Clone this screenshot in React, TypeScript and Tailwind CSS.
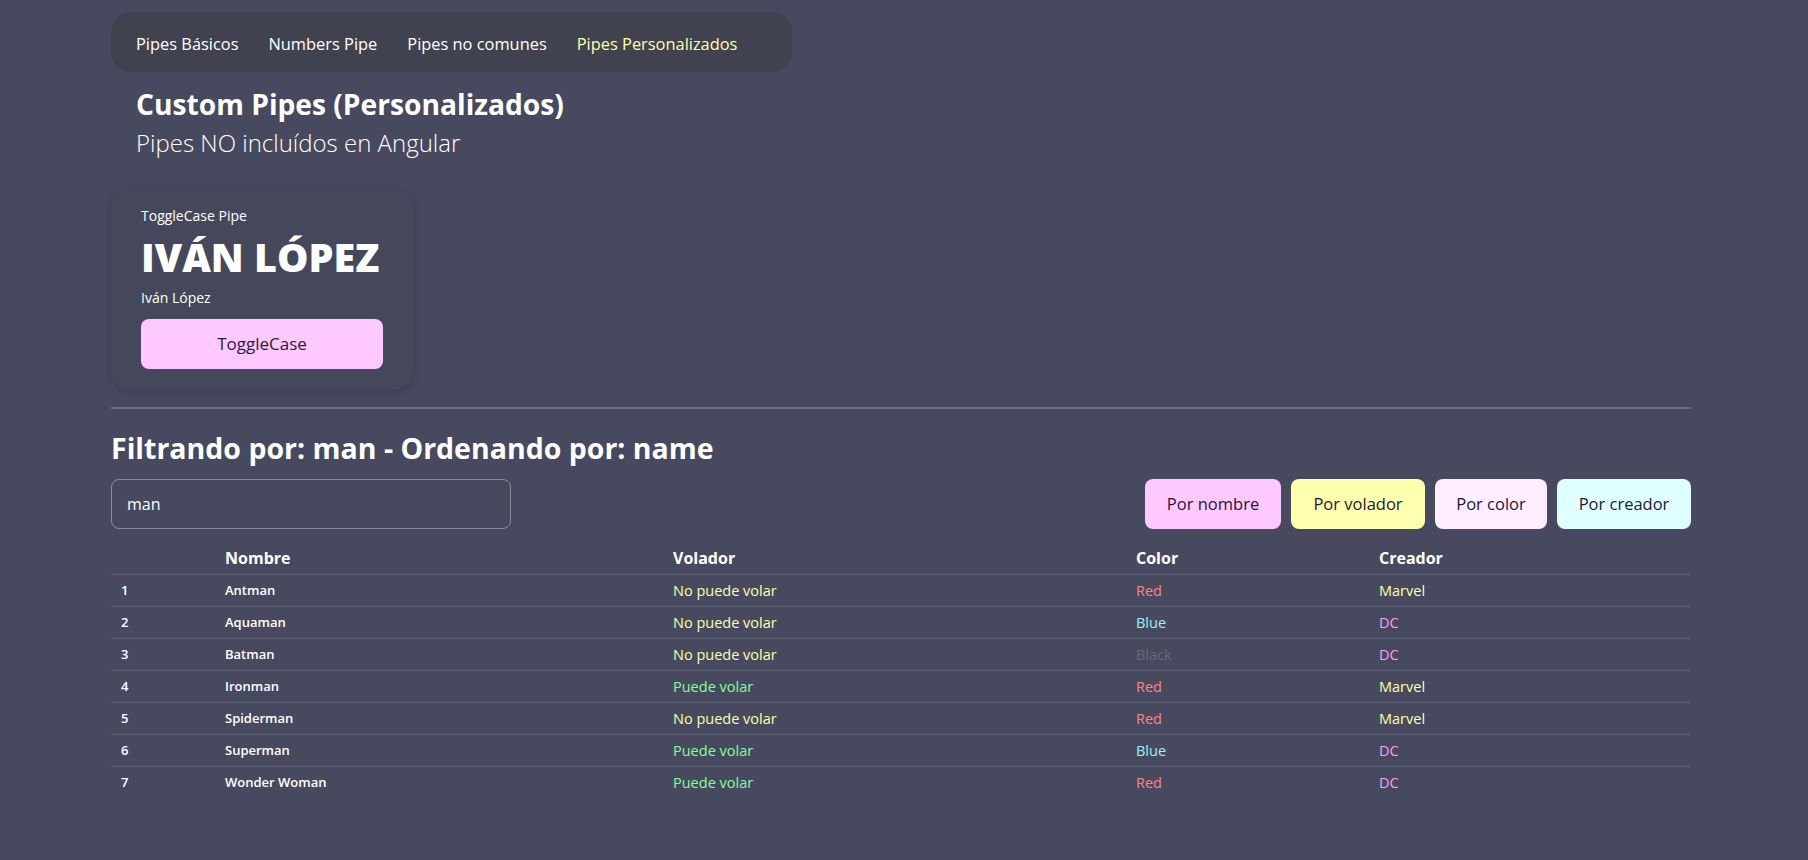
import { useState } from "react";

type Hero = {
  name: string;
  canFly: boolean;
  color: "Red" | "Blue" | "Black";
  creator: "Marvel" | "DC";
};

const HEROES: Hero[] = [
  { name: "Antman", canFly: false, color: "Red", creator: "Marvel" },
  { name: "Aquaman", canFly: false, color: "Blue", creator: "DC" },
  { name: "Batman", canFly: false, color: "Black", creator: "DC" },
  { name: "Ironman", canFly: true, color: "Red", creator: "Marvel" },
  { name: "Spiderman", canFly: false, color: "Red", creator: "Marvel" },
  { name: "Superman", canFly: true, color: "Blue", creator: "DC" },
  { name: "Wonder Woman", canFly: true, color: "Red", creator: "DC" },
];

const COLOR_CLASS: Record<Hero["color"], string> = {
  Red: "text-[#ff8585]",
  Blue: "text-[#9eefff]",
  Black: "text-[#67696f]",
};

const CREATOR_CLASS: Record<Hero["creator"], string> = {
  Marvel: "text-[#ffffa8]",
  DC: "text-[#f99dfa]",
};

const NAV = ["Pipes Básicos", "Numbers Pipe", "Pipes no comunes", "Pipes Personalizados"];

const SORT_BUTTONS = [
  { label: "Por nombre", className: "w-[136px] bg-[#ffc8ff]" },
  { label: "Por volador", className: "w-[134px] bg-[#ffffb0]" },
  { label: "Por color", className: "w-[112px] bg-[#ffeeff]" },
  { label: "Por creador", className: "w-[134px] bg-[#e0ffff]" },
];

const COLS = "grid grid-cols-[104px_448px_463px_243px_1fr]";

export default function App() {
  const [upper, setUpper] = useState(true);
  const [search, setSearch] = useState("man");

  return (
    <div className="min-h-screen bg-[#474a5e] font-['Open_Sans','Noto_Sans',sans-serif] text-white">
      <div className="ml-[111px] w-[1580px] pt-3">
        {/* Menu */}
        <nav className="flex h-[60px] w-[681px] items-center gap-[30px] rounded-[20px] bg-[#40424f] px-[25px] pt-1 text-[16.4px]">
          {NAV.map((item, i) => (
            <span key={item} className={i === 3 ? "text-[#ffffaa]" : "text-white"}>
              {item}
            </span>
          ))}
        </nav>

        <div className="px-[25px] pt-[14px]">
          <h1 className="text-[28.2px] font-bold leading-[36px]">Custom Pipes (Personalizados)</h1>
          <p className="mt-[4px] text-[24px] font-light leading-[34px]">Pipes NO incluídos en Angular</p>
        </div>

        {/* ToggleCase card */}
        <div className="mt-[30px] w-[302px] rounded-2xl bg-[#45485b] px-[30px] pb-5 pt-[16px] shadow-[0_2px_8px_rgba(0,0,0,0.18)]">
          <div className="text-[14px] leading-5">ToggleCase Pipe</div>
          <div className="mt-[8px] whitespace-nowrap text-[39.5px] font-black leading-[46px]">
            {upper ? "IVÁN LÓPEZ" : "iván lópez"}
          </div>
          <div className="mt-[8px] text-[14px] leading-5">Iván López</div>
          <button
            onClick={() => setUpper(!upper)}
            className="mt-[11px] h-[50px] w-full rounded-lg bg-[#ffc8ff] text-[17px] text-[#2a1b3d]"
          >
            ToggleCase
          </button>
        </div>

        <div className="mt-[18px] h-[2px] w-full bg-[#6c6e7e]" />

        <h2 className="mt-[22px] text-[28.5px] font-bold leading-[34px]">
          Filtrando por: {search} - Ordenando por: name
        </h2>

        <div className="mt-[14px] flex items-center justify-between">
          <input
            value={search}
            onChange={(e) => setSearch(e.target.value)}
            className="h-[50px] w-[400px] rounded-lg border border-[#8a8c9b] bg-transparent px-[15px] text-[16px] text-white outline-none"
          />
          <div className="flex gap-[10px]">
            {SORT_BUTTONS.map((b) => (
              <button
                key={b.label}
                className={`h-[50px] rounded-lg text-[16.5px] text-[#22173a] ${b.className}`}
              >
                {b.label}
              </button>
            ))}
          </div>
        </div>

        {/* Heroes table */}
        <div className="mt-[12px]">
          <div className={`${COLS} h-[34px] items-center border-b border-[#5b5e70] text-[16px] font-bold`}>
            <span />
            <span className="pl-[10px]">Nombre</span>
            <span className="pl-[10px]">Volador</span>
            <span className="pl-[10px]">Color</span>
            <span className="pl-[10px]">Creador</span>
          </div>
          {HEROES.map((h, i) => (
            <div
              key={h.name}
              className={`${COLS} h-[32px] items-center ${i < HEROES.length - 1 ? "border-b border-[#5b5e70]" : ""}`}
            >
              <span className="pl-[10px] text-[13px] font-semibold">{i + 1}</span>
              <span className="pl-[10px] text-[13px] font-semibold">{h.name}</span>
              <span className={`pl-[10px] text-[14.5px] ${h.canFly ? "text-[#80ff9f]" : "text-[#ffffa8]"}`}>
                {h.canFly ? "Puede volar" : "No puede volar"}
              </span>
              <span className={`pl-[10px] text-[14.5px] ${COLOR_CLASS[h.color]}`}>{h.color}</span>
              <span className={`pl-[10px] text-[14.5px] ${CREATOR_CLASS[h.creator]}`}>{h.creator}</span>
            </div>
          ))}
        </div>
      </div>
    </div>
  );
}
